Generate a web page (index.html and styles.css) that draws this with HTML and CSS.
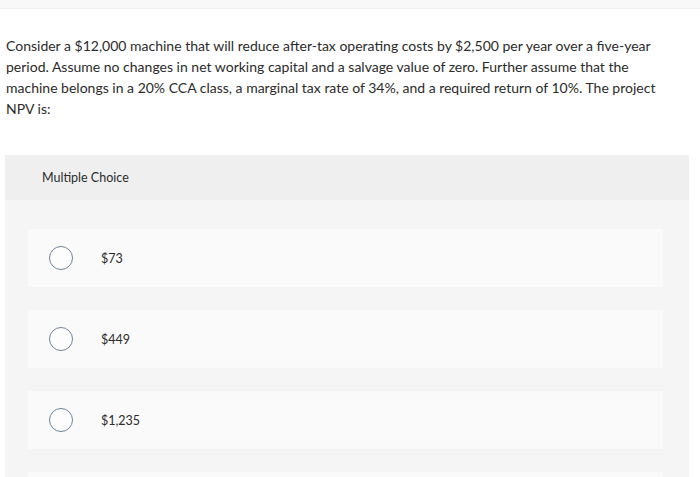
FILE: index.html
```html
<!DOCTYPE html>
<html>
<head>
<meta charset="utf-8">
<link rel="stylesheet" href="styles.css">
</head>
<body>
<div class="topbar"></div>
<p class="question">Consider a $12,000 machine that will reduce after-tax operating costs by $2,500 per year over a five-year<br>period. Assume no changes in net working capital and a salvage value of zero. Further assume that the<br>machine belongs in a 20% CCA class, a marginal tax rate of 34%, and a required return of 10%. The project<br>NPV is:</p>
<section class="panel">
  <header class="panel-head">Multiple Choice</header>
  <div class="panel-body">
    <div class="option"><span class="radio"></span><span class="label">$73</span></div>
    <div class="option"><span class="radio"></span><span class="label">$449</span></div>
    <div class="option"><span class="radio"></span><span class="label">$1,235</span></div>
    <div class="option option-clipped"></div>
  </div>
</section>
</body>
</html>
```
FILE: styles.css
```css
html, body {
  margin: 0;
  padding: 0;
  background: #ffffff;
  overflow: hidden;
}
body {
  font-family: "Lato", "Open Sans", sans-serif;
  color: #2b2b2b;
  width: 700px;
  height: 477px;
}
.topbar {
  height: 8px;
  background: #f8f8f8;
  border-bottom: 1px solid #f0f0f0;
}
.question {
  margin: 26px 0 0 0;
  padding: 0 0 0 6px;
  font-size: 14px;
  line-height: 21px;
  white-space: nowrap;
}
.panel {
  margin: 36px 0 0 5px;
  width: 684px;
  background: #f5f5f5;
}
.panel-head {
  height: 45px;
  display: flex;
  align-items: center;
  padding-left: 37px;
  background: #efefef;
  font-size: 12.5px;
  color: #2b2b2b;
}
.panel-body {
  padding: 29px 26px 10px 23px;
  display: flex;
  flex-direction: column;
  gap: 23px;
}
.option {
  height: 58px;
  background: #fafafa;
  display: flex;
  align-items: center;
  padding-left: 21px;
}
.radio {
  width: 22px;
  height: 22px;
  border: 1.5px solid #6f8399;
  border-radius: 50%;
  background: #fdfdfd;
  flex: none;
}
.label {
  margin-left: 28px;
  font-size: 12.5px;
  color: #2b2b2b;
}
```
